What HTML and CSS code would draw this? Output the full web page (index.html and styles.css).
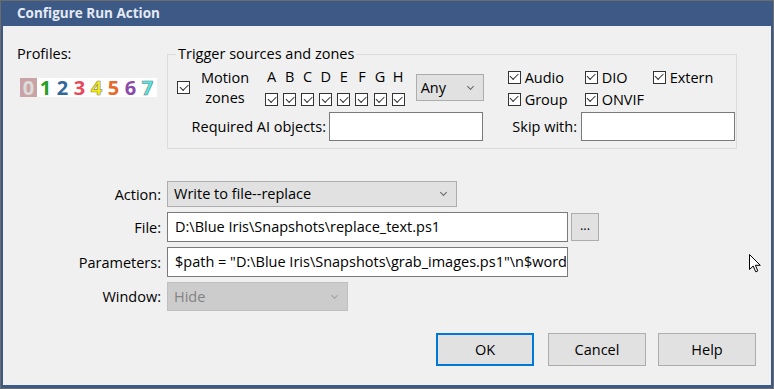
FILE: index.html
```html
<!DOCTYPE html>
<html lang="en">
<head>
  <meta charset="UTF-8" />
  <title>Configure Run Action</title>
  <link rel="stylesheet" href="styles.css">
</head>
<body>

  <div class="window">
    <div class="titlebar">Configure Run Action</div>

    <div class="content">
      <div class="top">
        <!-- PROFILES -->
        <div class="profiles">
          <div class="label">Profiles:</div>
          <div class="digits">
            <span class="d d0">0</span>
            <span class="d d1">1</span>
            <span class="d d2">2</span>
            <span class="d d3">3</span>
            <span class="d d4">4</span>
            <span class="d d5">5</span>
            <span class="d d6">6</span>
            <span class="d d7">7</span>
          </div>
        </div>

        <!-- TRIGGERS -->
        <fieldset class="triggers">
          <legend>Trigger sources and zones</legend>
          <div class="trig-row">
            <span class="cb motion-cb"></span>
            <div class="motion-label">Motion<br>zones</div>
            <div class="zones">
              <span>A</span><span>B</span><span>C</span><span>D</span>
              <span>E</span><span>F</span><span>G</span><span>H</span>
              <span class="cb"></span><span class="cb"></span><span class="cb"></span><span class="cb"></span>
              <span class="cb"></span><span class="cb"></span><span class="cb"></span><span class="cb"></span>
            </div>
            <div class="select any">Any</div>
            <div class="sources">
              <label class="chk"><span class="cb"></span>Audio</label>
              <label class="chk"><span class="cb"></span>DIO</label>
              <label class="chk"><span class="cb"></span>Extern</label>
              <label class="chk"><span class="cb"></span>Group</label>
              <label class="chk"><span class="cb"></span>ONVIF</label>
            </div>
          </div>
          <div class="trig-row row2">
            <div class="ai-label">Required AI objects:</div>
            <div class="input small"></div>
            <div class="skip-label">Skip with:</div>
            <div class="input small"></div>
          </div>
        </fieldset>
      </div>

      <!-- ACTION FORM -->
      <div class="form">
        <div class="f-label">Action:</div>
        <div class="select action">Write to file--replace</div>

        <div class="f-label">File:</div>
        <div class="file-row">
          <div class="input wide">D:\Blue Iris\Snapshots\replace_text.ps1</div>
          <div class="browse">...</div>
        </div>

        <div class="f-label">Parameters:</div>
        <div class="input wide">$path = "D:\Blue Iris\Snapshots\grab_images.ps1"\n$word</div>

        <div class="f-label">Window:</div>
        <div class="select disabled">Hide</div>
      </div>

      <div class="buttons">
        <button class="btn default">OK</button>
        <button class="btn cancel">Cancel</button>
        <button class="btn">Help</button>
      </div>
    </div>

    <svg class="cursor" width="13" height="20" viewBox="0 0 13 20">
      <path d="M0.5 0.5 L0.5 15.5 L4.2 12 L6.7 17.8 L8.8 16.9 L6.4 11.3 L11.3 11.3 Z" fill="#fff" stroke="#000" stroke-width="1"/>
    </svg>
  </div>

</body>
</html>
```

FILE: styles.css
```css
body {
  margin: 0;
  font-family: 'Open Sans', 'Noto Sans', sans-serif;
  font-size: 14.5px;
  color: #000;
  background-color: #f0f0f0;
}

.window {
  position: relative;
  width: 774px;
  height: 389px;
  box-sizing: border-box;
  border: 1px solid #6c6c6c;
  background-color: #3d5a87;
  padding: 0 2px 3px 2px;
  display: flex;
  flex-direction: column;
}

.titlebar {
  height: 25px;
  line-height: 24px;
  padding-left: 14px;
  color: #e4eaf3;
  font-weight: bold;
  font-size: 13.5px;
}

.content {
  flex: 1;
  background-color: #f0f0f0;
}

/* top part */
.top {
  display: flex;
  padding-top: 18px;
}

.profiles {
  width: 150px;
  margin-left: 14px;
}

.label {
  line-height: 20px;
}

.digits {
  display: flex;
  margin-top: 14px;
  margin-left: 3px;
  width: 137px;
  background-color: #fff;
}

.d {
  width: 17px;
  height: 19px;
  line-height: 19px;
  text-align: center;
  font-weight: bold;
  font-size: 20px;
}

.d0 { background-color: #c9a3a5; color: #dcdcdc; }
.d1 { color: #22a022; }
.d2 { color: #33669a; }
.d3 { color: #e8495a; }
.d4 { color: #f4f000; -webkit-text-stroke: 0.6px #888; }
.d5 { color: #e8682a; }
.d6 { color: #8a4aa8; }
.d7 { color: #4af0e6; -webkit-text-stroke: 0.6px #777; }

.triggers {
  margin: 0;
  width: 570px;
  box-sizing: border-box;
  border: 1px solid #dcdcdc;
  padding: 2px 0 7px 9px;
}

.triggers legend {
  padding: 0 2px;
  margin-left: -1px;
  line-height: 20px;
}

.trig-row {
  display: flex;
  align-items: flex-start;
  height: 40px;
}

.cb {
  display: inline-block;
  position: relative;
  width: 13px;
  height: 13px;
  box-sizing: border-box;
  border: 1px solid #333;
  background-color: #fff;
  flex-shrink: 0;
}

.cb::after {
  content: "";
  position: absolute;
  left: 1.5px;
  top: 1.5px;
  width: 7px;
  height: 3.5px;
  border-left: 1px solid #333;
  border-bottom: 1px solid #333;
  transform: rotate(-45deg);
}

.motion-cb {
  margin-top: 15px;
}

.motion-label {
  width: 52px;
  margin-left: 9px;
  margin-top: 2px;
  line-height: 20px;
  text-align: center;
}

.zones {
  display: grid;
  grid-template-columns: repeat(8, 13px);
  column-gap: 5.1px;
  margin-left: 14px;
  margin-top: 2px;
  line-height: 18px;
  text-align: center;
}

.zones .cb {
  margin-top: 7px;
}

.select {
  position: relative;
  box-sizing: border-box;
  background-color: #e1e1e1;
  border: 1px solid #adadad;
  padding-left: 6px;
}

.select::after {
  content: "";
  position: absolute;
  right: 10px;
  top: 50%;
  width: 4px;
  height: 4px;
  margin-top: -4px;
  border-right: 1px solid #666;
  border-bottom: 1px solid #666;
  transform: rotate(45deg);
}

.any {
  width: 68px;
  height: 27px;
  line-height: 25px;
  margin-left: 11px;
  margin-top: 8px;
  padding-left: 4px;
}

.sources {
  display: grid;
  grid-template-columns: 77px 68px auto;
  grid-auto-rows: 22px;
  align-items: center;
  margin-left: 24px;
  margin-top: 0;
}

.chk {
  display: flex;
  align-items: center;
  gap: 4px;
}

.row2 {
  margin-top: 6px;
  height: 29px;
  align-items: center;
}

.ai-label {
  width: 149px;
  text-align: right;
}

.skip-label {
  width: 94px;
  text-align: right;
}

.input {
  box-sizing: border-box;
  background-color: #fff;
  border: 1px solid #7a7a7a;
  white-space: nowrap;
  overflow: hidden;
}

.input.small {
  width: 154px;
  height: 29px;
  margin-left: 3px;
}

.row2 .input.small:last-child {
  margin-left: 4px;
}

/* action form */
.form {
  display: grid;
  grid-template-columns: 158px auto;
  column-gap: 6px;
  grid-template-rows: 26px 30px 30px 29px;
  row-gap: 5px;
  margin-top: 32px;
  align-items: center;
  justify-items: start;
}

.f-label {
  justify-self: end;
}

.action {
  width: 290px;
  height: 26px;
  line-height: 24px;
}

.file-row {
  display: flex;
  align-items: center;
  gap: 3px;
}

.input.wide {
  width: 401px;
  height: 30px;
  line-height: 28px;
  padding-left: 7px;
}

.browse {
  width: 28px;
  height: 28px;
  box-sizing: border-box;
  background-color: #e1e1e1;
  border: 1px solid #adadad;
  text-align: center;
  line-height: 22px;
  font-size: 13px;
}

.disabled {
  width: 181px;
  height: 29px;
  line-height: 27px;
  background-color: #cccccc;
  border-color: #bfbfbf;
  color: #838383;
}

.disabled::after {
  border-color: #a0a0a0;
}

.buttons {
  display: flex;
  justify-content: flex-end;
  margin-top: 22px;
  padding-right: 15px;
}

.btn {
  width: 98px;
  height: 33px;
  font-family: inherit;
  font-size: 14.5px;
  background-color: #e1e1e1;
  border: 1px solid #adadad;
  color: #000;
  padding: 0;
  margin-left: 12px;
}

.btn.default {
  border: 2px solid #0078d7;
}

.btn.cancel {
  margin-left: 14px;
}

.cursor {
  position: absolute;
  left: 748px;
  top: 253px;
}
```
